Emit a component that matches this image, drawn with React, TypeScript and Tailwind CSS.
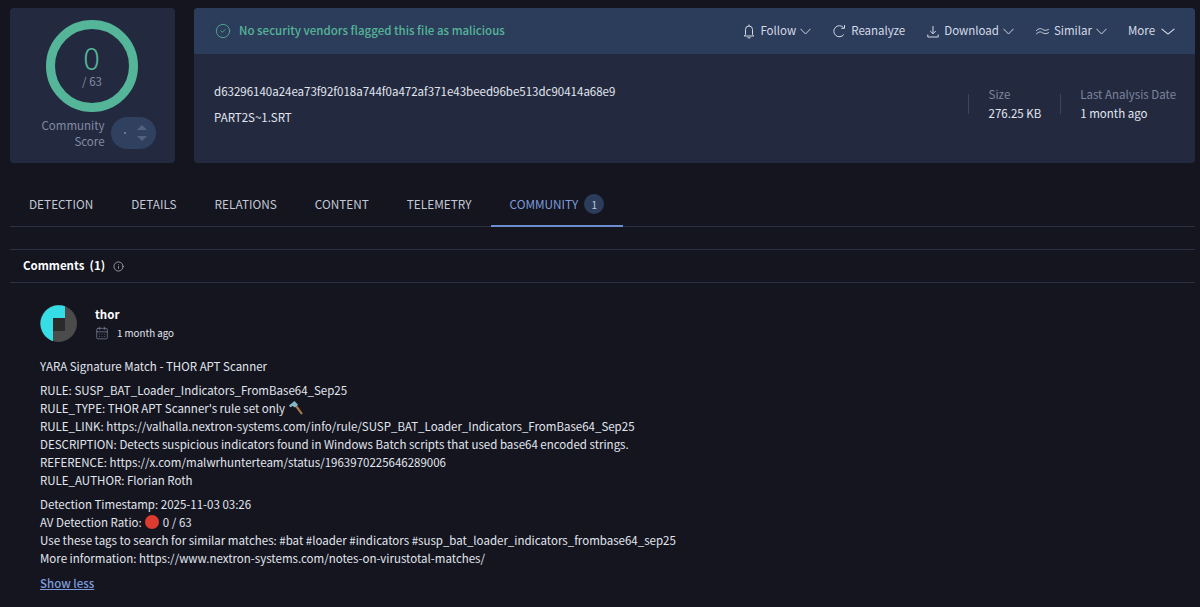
import React from 'react';
import { Info, CalendarDays, CircleCheck } from 'lucide-react';

const FONT = { fontFamily: '"Noto Sans CJK JP", "Noto Sans", sans-serif' };

const Chevron: React.FC<{ wide?: boolean }> = ({ wide }) => (
  <svg width={wide ? 14 : 11} height="7" viewBox="0 0 12 7" preserveAspectRatio="none" fill="none" stroke="currentColor" strokeWidth="1">
    <path d="M.5.8 6 6l5.500-5.200" />
  </svg>
);

const BellIcon: React.FC = () => (
  <svg width="12" height="15" viewBox="0 0 12 15" fill="none" stroke="currentColor" strokeWidth="1">
    <path d="M6 .5v1.500M2.500 10.500V5.500a3.500 3.500 0 0 1 7 0v5l1.200 1.500H1.300z" />
    <path d="M4.500 13.800h3" />
  </svg>
);

const ReloadIcon: React.FC = () => (
  <svg width="13" height="14" viewBox="0 0 13 14" fill="none" stroke="currentColor" strokeWidth="1">
    <path d="M10.800 10.500A5.500 5.500 0 1 1 10.400 3.500" />
    <path d="M11.500 1v3.300H8.300" />
  </svg>
);

const DownloadIcon: React.FC = () => (
  <svg width="12" height="13" viewBox="0 0 12 13" fill="none" stroke="currentColor" strokeWidth="1">
    <path d="M6 1v7.500M3.200 6 6 8.800 8.800 6" />
    <path d="M.8 9.500v2.500h10.400V9.500" />
  </svg>
);

const SimilarIcon: React.FC = () => (
  <svg width="13" height="9" viewBox="0 0 14 9" fill="none" stroke="currentColor" strokeWidth="1" strokeLinecap="round">
    <path d="M.5 3.500C3 1 5 .8 7 2.200s4 1.500 6.500 0" />
    <path d="M.5 7C3 4.500 5 4.500 7 5.800s4 1.500 6.500 0" />
  </svg>
);

const Hammer: React.FC = () => (
  <svg width="16" height="16" viewBox="0 0 16 16" className="inline-block align-[-3px]">
    <path d="M7 6.500 8.800 5l6 8.500-1.600 1.300z" fill="#a9784a" />
    <path d="M1 5.500 6.500 1l3.500 3.800-3.200 2.700-2-1.500-2.600 1.200z" fill="#86b9c4" />
  </svg>
);

const RedDot: React.FC = () => (
  <span className="mx-[1px] inline-block h-[14px] w-[14px] rounded-full bg-[#dd3a30] align-[-2px]" />
);

const Action: React.FC<{ icon?: React.ReactNode; label: string; chevron?: boolean }> = ({ icon, label, chevron }) => (
  <button className="flex items-center gap-[4px] text-[#d5dae6]">
    {icon && <span className="mr-[1px] flex">{icon}</span>}
    <span>{label}</span>
    {chevron && <Chevron />}
  </button>
);

const tabs = ['DETECTION', 'DETAILS', 'RELATIONS', 'CONTENT', 'TELEMETRY'];

const App: React.FC = () => {
  return (
    <div style={FONT} className="h-[607px] w-[1200px] overflow-hidden bg-[#14151f] text-[11.5px] text-[#e2e6ee]">
      <div className="flex gap-[19px] pl-[10px] pr-[5px] pt-[8px]">
        <div className="flex h-[155px] w-[165px] flex-col items-center rounded-[4px] bg-[#232a40] pt-[12px]">
          <div className="-ml-[2px] flex h-[92px] w-[92px] flex-col items-center justify-center rounded-full border-[9px] border-[#55b598] pb-[3px]">
            <span className="text-[31px] font-light leading-[33px] text-[#55b598]">0</span>
            <span className="pl-[1px] text-[11.5px] leading-[16px] text-[#828aa3]">/ 63</span>
          </div>
          <div className="mt-[5px] flex items-center gap-[6px] pl-[12px]">
            <span className="text-right leading-[16px] text-[#828aa3]">Community<br />Score</span>
            <div className="flex h-[32px] w-[45px] items-center justify-end gap-[11px] rounded-full bg-[#30415f] pr-[9px]">
              <span className="h-[2px] w-[2px] rounded-full bg-[#828aa3]" />
              <div className="flex flex-col gap-[6px]">
                <span className="block h-0 w-0 border-x-[5px] border-b-[5px] border-x-transparent border-b-[#53617e]" />
                <span className="block h-0 w-0 border-x-[5px] border-t-[5px] border-x-transparent border-t-[#53617e]" />
              </div>
            </div>
          </div>
        </div>

        <div className="h-[155px] w-[1001px] rounded-[4px] bg-[#232a40]">
          <div className="flex h-[46px] items-center justify-between rounded-t-[4px] bg-[#2c3d5b] pl-[21px] pr-[20px]">
            <div className="flex items-center gap-[8px] font-medium text-[#55b598]">
              <CircleCheck className="h-[16px] w-[16px]" strokeWidth={1.25} />
              <span>No security vendors flagged this file as malicious</span>
            </div>
            <div className="flex items-center gap-[22px]">
              <Action icon={<BellIcon />} label="Follow" chevron />
              <Action icon={<ReloadIcon />} label="Reanalyze" />
              <Action icon={<DownloadIcon />} label="Download" chevron />
              <Action icon={<SimilarIcon />} label="Similar" chevron />
              <button className="-ml-px flex items-center gap-[6px] text-[#d5dae6]">
                More
                <Chevron wide />
              </button>
            </div>
          </div>
          <div className="flex items-start justify-between pl-[20px] pr-[19px] pt-[28px]">
            <div className="leading-[18px]">
              <div>d63296140a24ea73f92f018a744f0a472af371e43beed96be513dc90414a68e9</div>
              <div className="mt-[8px]">PART2S~1.SRT</div>
            </div>
            <div className="flex items-center pt-[3px]">
              <div className="h-[20px] w-px bg-[#3a4560]" />
              <div className="pl-[20px] pr-[19px] leading-[19px]">
                <div className="text-[#7d859d]">Size</div>
                <div>276.25 KB</div>
              </div>
              <div className="h-[20px] w-px bg-[#3a4560]" />
              <div className="pl-[19px] leading-[19px]">
                <div className="text-[#7d859d]">Last Analysis Date</div>
                <div>1 month ago</div>
              </div>
            </div>
          </div>
        </div>
      </div>

      <div className="ml-[10px] mt-[21px] flex h-[43px] w-[1185px] items-stretch border-b border-[#2b3045] text-[11.8px]">
        {tabs.map((t) => (
          <div key={t} className="flex items-center px-[19px] pb-[2px] text-[#c3c8d6]">{t}</div>
        ))}
        <div className="-mb-px flex items-center gap-[6px] border-b-2 border-[#6d8dd0] px-[19px] pb-[1px] text-[#7d9bdc]">
          COMMUNITY
          <span className="flex h-[20px] w-[20px] items-center justify-center rounded-full bg-[#2c3d5b] text-[10px] text-[#c3c8d6]">1</span>
        </div>
      </div>

      <div className="ml-[10px] mt-[22px] flex h-[34px] w-[1185px] items-center gap-[8px] border-y border-[#2b3045] pl-[13px]">
        <span className="font-bold text-white">Comments&nbsp; (1)</span>
        <Info className="h-[11px] w-[11px] text-[#c3c8d6]" strokeWidth={1.5} />
      </div>

      <div className="pl-[40px] pt-[22px]">
        <div className="flex items-center gap-[18px]">
          <svg width="37" height="37" viewBox="0 0 37 37">
            <circle cx="18.500" cy="18.500" r="18.500" fill="#4b4b4b" />
            <path d="M25 1.200V13H13v23.200A18.500 18.500 0 1 1 25 1.200z" fill="#35dde6" />
            <rect x="13" y="13" width="12" height="13" fill="#2b2b2b" />
          </svg>
          <div className="-mt-[2px]">
            <div className="font-bold leading-[18px] text-white">thor</div>
            <div className="mt-[2px] flex items-center gap-[8px] text-[9.75px] leading-[16px]">
              <CalendarDays className="h-[14px] w-[14px] text-[#7d859d]" strokeWidth={1.25} />
              1 month ago
            </div>
          </div>
        </div>

        <div className="mt-[15px] leading-[18px]">
          <div>YARA Signature Match - THOR APT Scanner</div>
          <div className="mt-[6px]">
            <div>RULE: SUSP_BAT_Loader_Indicators_FromBase64_Sep25</div>
            <div>RULE_TYPE: THOR APT Scanner's rule set only <Hammer /></div>
            <div>RULE_LINK: https://valhalla.nextron-systems.com/info/rule/SUSP_BAT_Loader_Indicators_FromBase64_Sep25</div>
            <div>DESCRIPTION: Detects suspicious indicators found in Windows Batch scripts that used base64 encoded strings.</div>
            <div>REFERENCE: https://x.com/malwrhunterteam/status/1963970225646289006</div>
            <div>RULE_AUTHOR: Florian Roth</div>
          </div>
          <div className="mt-[6px]">
            <div>Detection Timestamp: 2025-11-03 03:26</div>
            <div>AV Detection Ratio: <RedDot /> 0 / 63</div>
            <div>Use these tags to search for similar matches: #bat #loader #indicators #susp_bat_loader_indicators_frombase64_sep25</div>
            <div>More information: https://www.nextron-systems.com/notes-on-virustotal-matches/</div>
          </div>
          <a className="mt-[7px] inline-block font-medium text-[#7d9bdc] underline">Show less</a>
        </div>
      </div>
    </div>
  );
};

export default App;
